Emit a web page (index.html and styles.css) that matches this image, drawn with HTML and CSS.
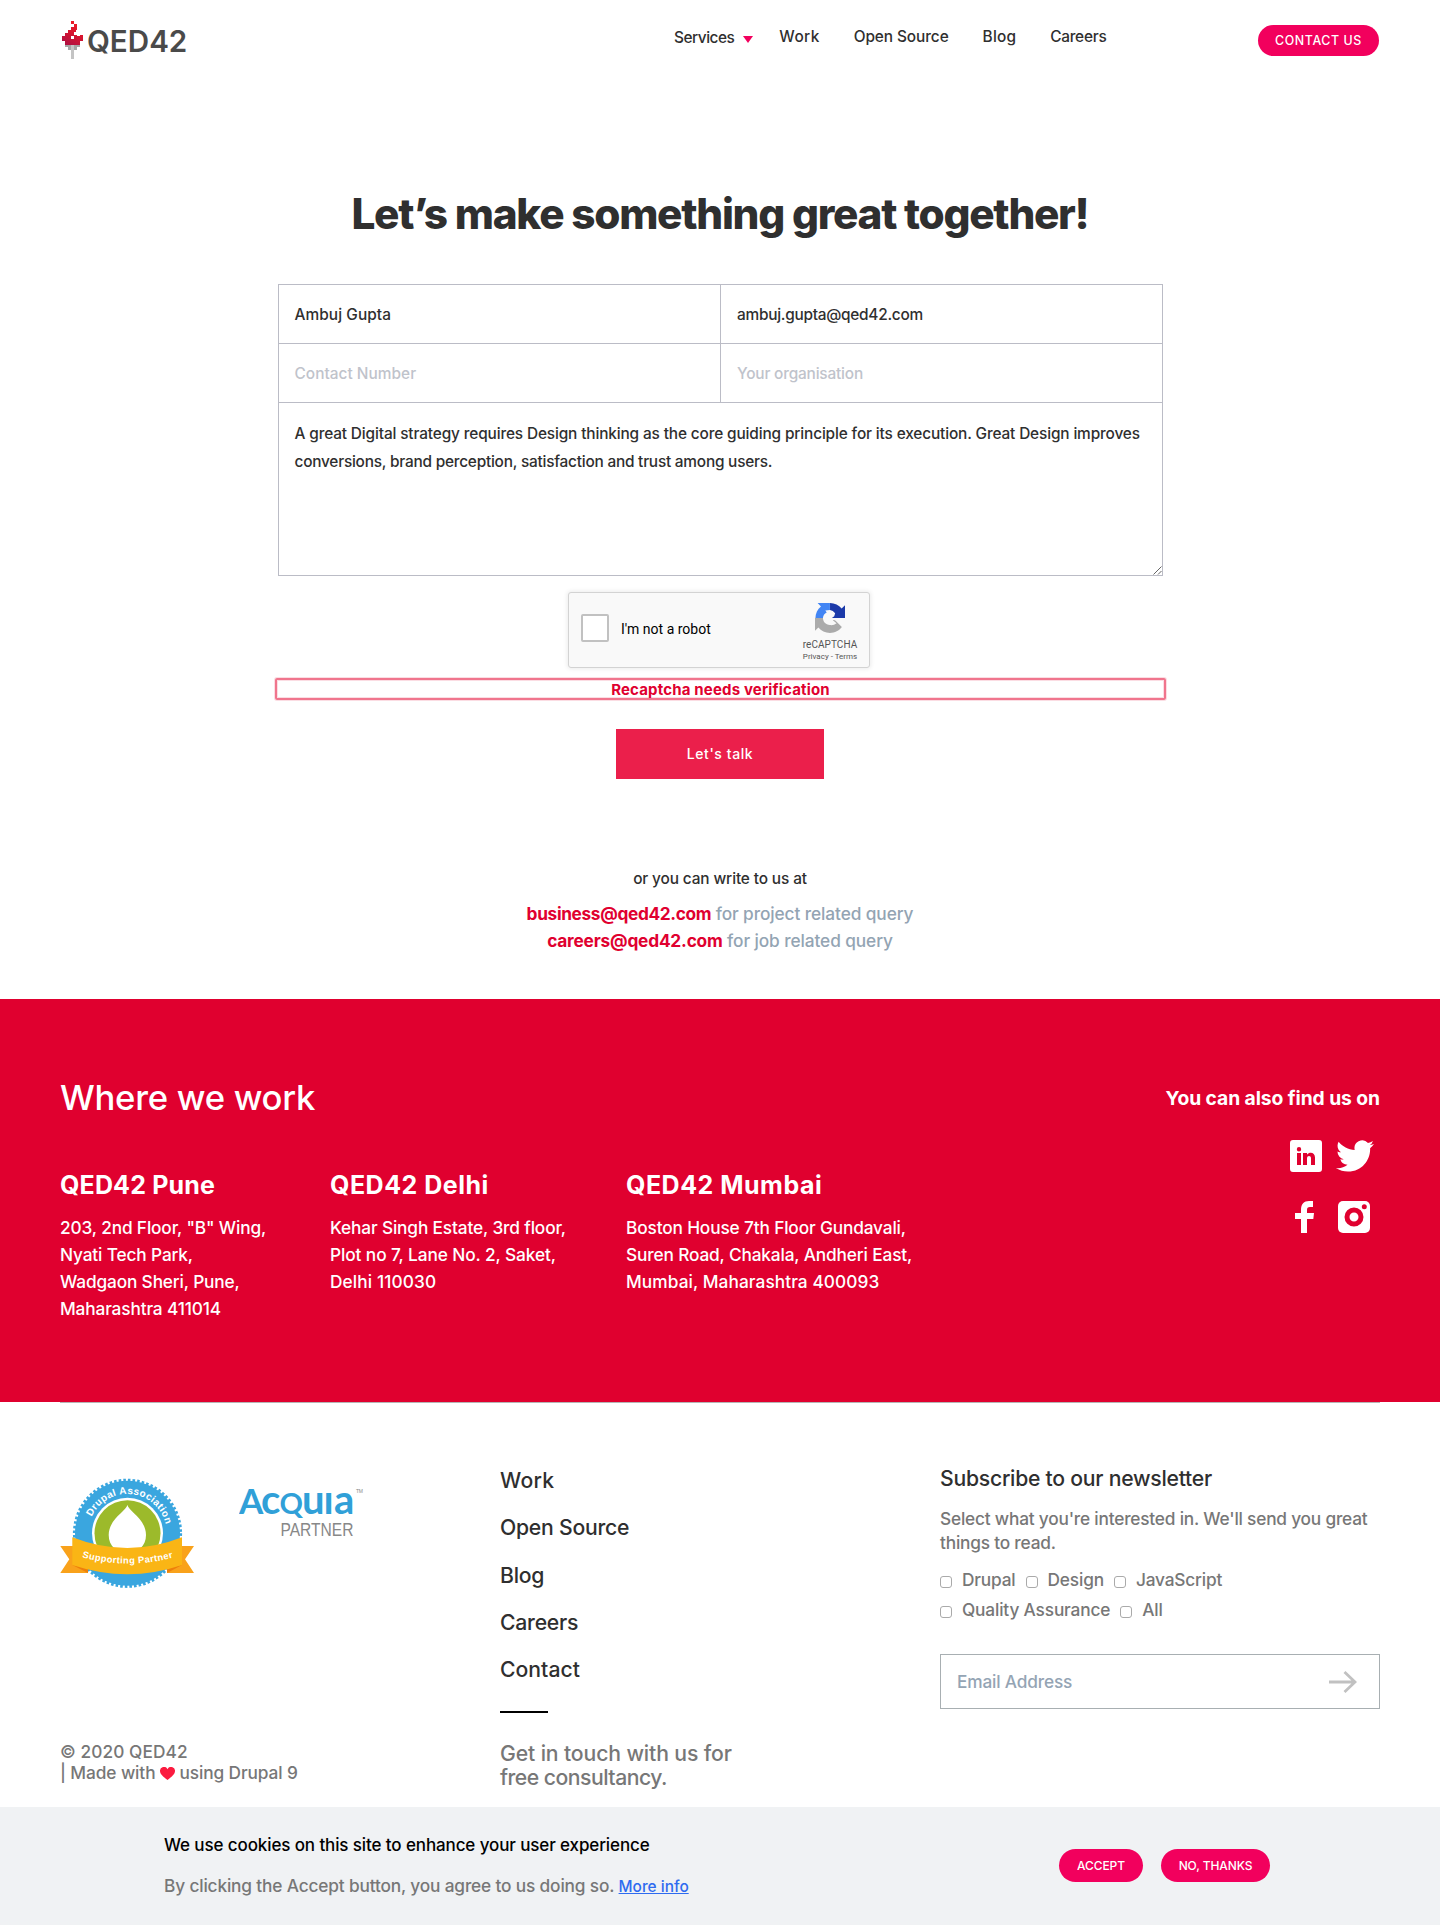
FILE: index.html
```html
<!DOCTYPE html>
<html lang="en">
<head>
<meta charset="utf-8">
<title>Contact | QED42</title>
<link rel="stylesheet" href="styles.css">
</head>
<body>
<header class="header">
  <a class="logo">
    <svg class="logo-mark" width="21" height="38" viewBox="0 0 21 38" shape-rendering="crispEdges">
      <defs><linearGradient id="flame" x1="0" y1="24" x2="12" y2="0" gradientUnits="userSpaceOnUse"><stop offset="0" stop-color="#a80f45"/><stop offset=".6" stop-color="#d8152f"/><stop offset="1" stop-color="#ee1c25"/></linearGradient></defs>
      <path fill="url(#flame)" d="M9 0h3v3H9zM12 3h3v6h-1v3h1v3h3v-1h3v6h-3v4H3v-4H0v-5h3v-3h3V9h3V6h3z"/>
      <path fill="#fff" d="M12 11h3v3h-3zM9 15h3v3H9z"/>
      <path fill="#a5a5a5" d="M3 24h15v2H3zM6 26h9v3H6z"/>
      <path fill="#c4c4c4" d="M9 24h3v14H9z"/>
    </svg>
    <span class="logo-text">QED42</span>
  </a>
  <nav class="nav">
    <a class="nav-link nav-drop"><span class="nav-services">Services</span><svg width="10" height="7" viewBox="0 0 10 7"><path fill="#f2005d" d="M0 0h10L5 7z"/></svg></a>
    <a class="nav-link nav-work">Work</a>
    <a class="nav-link nav-os">Open Source</a>
    <a class="nav-link nav-blog">Blog</a>
    <a class="nav-link nav-careers">Careers</a>
  </nav>
  <a class="pill pill-contact">CONTACT US</a>
</header>

<main class="main">
  <h1 class="title">Let’s make something great together!</h1>
  <form class="form">
    <div class="fields">
      <div class="field name">Ambuj Gupta</div>
      <div class="field address">ambuj.gupta@qed42.com</div>
      <div class="field empty phone">Contact Number</div>
      <div class="field empty">Your organisation</div>
      <div class="field message">
        <span class="message-first">A great Digital strategy requires Design thinking as the core guiding principle for its execution. Great Design improves</span><br><span>conversions, brand perception, satisfaction and trust among users.</span>
        <svg class="grip" width="9" height="9" viewBox="0 0 9 9"><path d="M.5 8.5l8-8M5 8.5L8.500 5" stroke="#666" fill="none"/></svg>
      </div>
    </div>
    <div class="captcha">
      <span class="captcha-box"></span>
      <span class="captcha-label">I'm not a robot</span>
      <div class="captcha-brand">
        <svg width="30" height="30" viewBox="0 0 64 64"><path fill="#1c3aa9" d="M64 32V4.687l-7.193 7.160C50.948 4.674 42.033.093 32.050.093V32z"/><path fill="#4285f4" d="M31.862.094H5.600l7.100 7.106C5.530 13.100.93 22.100.93 32.045H31.862z"/><path fill="#ababab" d="M.002 32.045V59.313l7.161-7.161C13.022 59.325 21.938 63.907 31.920 63.907c10.390 0 19.620-4.970 25.440-12.660L44 38 32 32z"/><path fill="#f9f9f9" d="M17 32c0-5 3-9.500 8-12l-3-4 10-1 6 2 5 5-2 6-5 4h8l-1 3-5 2 8 6c-4 3-9 5-14 4-10-1-15-7-15-15z"/></svg>
        <span class="captcha-name">reCAPTCHA</span>
        <span class="captcha-terms">Privacy - Terms</span>
      </div>
    </div>
    <p class="error">Recaptcha needs verification</p>
    <button class="submit" type="button">Let's talk</button>
  </form>
  <div class="write">
    <p class="write-lead">or you can write to us at</p>
    <p class="write-row"><b class="write-business">business@qed42.com</b> <span>for project related query</span></p>
    <p class="write-row"><b>careers@qed42.com</b> <span>for job related query</span></p>
  </div>
</main>

<section class="where">
  <div class="where-head">
    <h2 class="where-title">Where we work</h2>
    <h3 class="find">You can also find us on</h3>
  </div>
  <div class="where-body">
    <div class="office pune"><h4>QED42 Pune</h4><p>203, 2nd Floor, "B" Wing,<br>Nyati Tech Park,<br>Wadgaon Sheri, Pune,<br>Maharashtra 411014</p></div>
    <div class="office delhi"><h4>QED42 Delhi</h4><p>Kehar Singh Estate, 3rd floor,<br><span class="delhi-plot">Plot no 7, Lane No. 2, Saket,</span><br><span class="delhi-pin">Delhi 110030</span></p></div>
    <div class="office mumbai"><h4>QED42 Mumbai</h4><p>Boston House 7th Floor Gundavali,<br>Suren Road, Chakala, Andheri East,<br><span class="mumbai-pin">Mumbai, Maharashtra 400093</span></p></div>
    <div class="social">
      <svg width="32" height="32" viewBox="0 0 32 32"><path fill="#fff" fill-rule="evenodd" d="M3 0h26a3 3 0 013 3v26a3 3 0 01-3 3H3a3 3 0 01-3-3V3a3 3 0 013-3zm4 13v12h4V13zm2-6a2.200 2.200 0 100 4.400A2.200 2.200 0 009 7zm4 6v12h4v-6.500c0-3.200 4-3.200 4 0V25h4v-7.500c0-5.300-5.500-6-8-2.800V13z"/></svg>
      <svg width="38" height="32" viewBox="0 2 24 20" preserveAspectRatio="none"><path fill="#fff" d="M24 4.557a9.830 9.830 0 01-2.828.775 4.932 4.932 0 002.165-2.724 9.864 9.864 0 01-3.127 1.195 4.916 4.916 0 00-8.384 4.482C7.691 8.094 4.066 6.130 1.640 3.161a4.822 4.822 0 00-.666 2.475c0 1.710.87 3.213 2.188 4.096a4.904 4.904 0 01-2.228-.616v.061a4.923 4.923 0 003.946 4.827 4.996 4.996 0 01-2.212.085 4.937 4.937 0 004.604 3.417 9.868 9.868 0 01-6.102 2.105c-.390 0-.779-.023-1.170-.067a13.995 13.995 0 007.557 2.209c9.054 0 13.999-7.496 13.999-13.986 0-.209 0-.420-.015-.630a9.936 9.936 0 002.460-2.580z"/></svg>
      <svg width="32" height="32" viewBox="0 0 32 32"><path fill="#fff" d="M11 32V18H5v-6h6V9c0-6 3-9 8-9h4v6h-3c-2.300 0-3 1-3 3v3h7l-.7 6H17v14z"/></svg>
      <svg width="32" height="32" viewBox="0 0 32 32"><rect width="32" height="32" rx="5" fill="#fff"/><circle cx="16" cy="16" r="7" fill="#fff" stroke="#e0002f" stroke-width="5"/><circle cx="26.300" cy="5.700" r="2.500" fill="#e0002f"/></svg>
    </div>
  </div>
</section>

<footer class="footer">
  <div class="foot-col">
    <div class="badges">
      <svg class="badge" width="135" height="112" viewBox="0 0 135 112">
        <circle cx="67.500" cy="55.300" r="52.500" fill="#3aa6df"/>
        <circle cx="67.500" cy="55.300" r="53" fill="none" stroke="#3aa6df" stroke-width="3.200" stroke-dasharray="2.600 2.025"/>
        <circle cx="67.500" cy="55.300" r="35.500" fill="#fff"/>
        <circle cx="67.500" cy="55.300" r="33" fill="#9cba2b"/>
        <path fill="#fff" d="M67.400 27c1 6 18.600 14 18.600 30 0 11-8 18-18.600 18S48.700 68 48.700 57c0-16 17.700-24 18.700-30z"/>
        <path fill="#f9a21b" d="M.3 68H28v27H.3l9-13.700zM134 68h-27v27h27l-9-13.700z"/>
        <path fill="#ee7f0b" d="M12.300 87L28 95v-6zM122 87l-15 8v-6z"/>
        <path fill="#fab515" d="M12.300 59.300q55.200 21.500 109.700 0V87q-54.500 18.500-109.700 0z"/>
        <path id="arc-top" fill="none" d="M31.700 38.800a39.400 39.400 0 0174.300 8.500"/>
        <path id="arc-band" fill="none" d="M22 79.300q45.500 12.500 92 0"/>
        <text class="badge-text badge-top"><textPath href="#arc-top" textLength="97">Drupal Association</textPath></text>
        <text class="badge-text"><textPath href="#arc-band" textLength="92">Supporting Partner</textPath></text>
      </svg>
      <svg class="acquia" width="136" height="76" viewBox="0 -14 136 76">
        <text class="acq" y="27"><tspan class="acq-a" x="0">A</tspan><tspan class="acq-l" x="22">c</tspan><tspan class="acq-q" x="40.500">Q</tspan><tspan class="acq-l" x="63">u</tspan><tspan class="acq-l" x="84.500">ı</tspan><tspan class="acq-l" x="95">a</tspan></text>
        <text class="acq-p" x="41.500" y="49" textLength="73" lengthAdjust="spacingAndGlyphs">PARTNER</text>
        <text class="acq-tm" x="117" y="6" textLength="7">TM</text>
      </svg>
    </div>
    <p class="copy"><span class="copy-year">© 2020 QED42</span><br>| Made with <svg class="heart" width="15" height="13" viewBox="0 0 15 13"><path fill="#fb1b3f" d="M7.500 13C3 9.500 0 7 0 4a3.900 3.900 0 017.500-1.700A3.900 3.900 0 0115 4c0 3-3 5.500-7.500 9z"/></svg> using Drupal 9</p>
  </div>
  <div class="foot-col foot-nav">
    <a class="foot-work">Work</a><a>Open Source</a><a>Blog</a><a>Careers</a><a class="foot-contact">Contact</a>
    <i class="rule"></i>
    <p class="touch">Get in touch with us for<br><span class="tight">free consultancy.</span></p>
  </div>
  <div class="foot-col foot-news">
    <h5 class="news-title">Subscribe to our newsletter</h5>
    <p class="news-text">Select what you're interested in. We'll send you great<br>things to read.</p>
    <div class="checks"><label><i></i><span>Drupal</span></label><label><i></i><span>Design</span></label><label><i></i><span>JavaScript</span></label></div>
    <div class="checks"><label><i></i><span>Quality Assurance</span></label><label><i></i><span>All</span></label></div>
    <div class="email"><span>Email Address</span><svg width="28" height="22" viewBox="0 0 28 22"><path fill="none" stroke="#c1c1c1" stroke-width="2.800" d="M0 11h26M15.500 1L26 11 15.500 21"/></svg></div>
  </div>
</footer>

<aside class="cookie">
  <div class="cookie-copy">
    <h6 class="cookie-title">We use cookies on this site to enhance your user experience</h6>
    <p class="cookie-text">By clicking the Accept button, you agree to us doing so. <a class="more">More info</a></p>
  </div>
  <a class="pill pill-accept">ACCEPT</a>
  <a class="pill pill-no">NO, THANKS</a>
</aside>
</body>
</html>
```
FILE: styles.css
```css
* { box-sizing: border-box; }
body { margin: 0; background: #fff; color: #2f2f2f; font-family: Inter, "Liberation Sans", sans-serif; font-weight: 450; font-size: 15.4px; }
h1, h2, h3, h4, h5, h6, p { margin: 0; }
svg { display: block; flex: none; }
span, a, b { white-space: nowrap; }

.header { height: 80px; padding: 21px 60px 0 62px; display: flex; align-items: flex-start; }
.logo { display: flex; width: 612px; }
.logo-text { margin-left: 4px; padding-top: 1px; font: 600 29.600px/38px Inter, sans-serif; color: #4a4a4a; }
.nav { display: flex; padding-top: 6px; line-height: 20px; width: 584px; }
.nav-link { margin-right: 34px; }
.nav-drop { display: flex; gap: 9px; margin-right: 26px; padding-top: 1px; }
.nav-drop svg { margin-top: 8px; }
.nav-services { letter-spacing: -.0305em; }
.nav-work { letter-spacing: .0250em; }
.nav-os { letter-spacing: -.0050em; }
.nav-blog { letter-spacing: .0120em; }
.nav-careers { letter-spacing: -.016em; }
.pill { display: flex; align-items: center; justify-content: center; background: #f2005d; color: #fff; border-radius: 17px; font-size: 12px; font-weight: 500; letter-spacing: -.008em; }
.pill-contact { width: 121px; height: 31px; margin-top: 4px; font-size: 12.400px; letter-spacing: .0480em; }

.main { height: 919px; }
.title { padding-top: 104px; text-align: center; font-size: 42.300px; line-height: 60px; font-weight: 800; letter-spacing: -.0300em; }
.form { width: 885px; margin: 40px auto 0 278px; display: flex; flex-direction: column; align-items: center; }
.fields { width: 885px; display: grid; grid-template-columns: 442px 443px; grid-template-rows: 59px 59px 174px; }
.field { border: 1px solid #bbbcc6; border-width: 1px 0 0 1px; padding: 20px 15.500px; line-height: 20px; letter-spacing: -.0118em; }
.field:nth-child(even) { border-right-width: 1px; padding-left: 16px; }
.field.name { letter-spacing: .0050em; }
.field.address { letter-spacing: -.0170em; }
.field.empty { color: #bfc3cb; }
.field.phone { letter-spacing: .0020em; }
.field.message { grid-column: 1 / 3; border-width: 1px; padding-top: 17px; line-height: 28px; position: relative; letter-spacing: -.0145em; }
.message-first { letter-spacing: -.0090em; }
.grip { position: absolute; right: 0; bottom: 0; }
.captcha { width: 302px; height: 76px; margin: 16px 3px 0 0; border: 1px solid #d3d3d3; border-radius: 3px; background: #f9f9f9; box-shadow: 0 0 4px 1px rgba(0,0,0,.08); display: flex; align-items: center; padding: 0 12px; font-family: Roboto, sans-serif; font-weight: 400; color: #000; }
.captcha-box { width: 28px; height: 28px; margin-bottom: 4px; background: #fff; border: 2px solid #c1c1c1; border-radius: 2px; }
.captcha-label { font-size: 14px; margin: 0 0 2px 12px; flex: 1; }
.captcha-brand { width: 54px; height: 76px; padding-top: 11px; display: flex; flex-direction: column; align-items: center; color: #555; }
.captcha-name { font-size: 10px; line-height: 12px; margin-top: 6px; letter-spacing: .008em; }
.captcha-terms { font-size: 8px; line-height: 10px; margin-top: 1px; }
.error { width: 891px; height: 22px; margin: 10px 0 0; border: 2px solid #f0758d; border-radius: 2px; box-shadow: 0 0 0 1px #fbdde3, inset 0 0 0 1px #fbdde3; text-align: center; color: #e0002f; font-size: 15px; font-weight: 700; line-height: 19px; letter-spacing: .0110em; }
.submit { width: 208px; height: 50px; margin: 29px 1px 0 0; border: 0; padding: 0; background: #eb1f4b; color: #fff; font: 500 14px/50px Inter, sans-serif; letter-spacing: .0400em; }
.write { margin-top: 90px; text-align: center; }
.write-lead { line-height: 20px; margin-bottom: 11px; letter-spacing: -.0081em; }
.write-row { font-size: 17.300px; line-height: 27px; color: #93a4b3; letter-spacing: -.0058em; }
.write-row b { color: #e0002f; font-weight: 700; letter-spacing: -.0115em; }
.write-row .write-business { letter-spacing: -.0205em; }

.where { height: 403px; background: #e0002f; color: #fff; padding: 75px 60px 0; }
.where-head { display: flex; justify-content: space-between; line-height: 46px; }
.where-title { font-size: 34.700px; font-weight: 450; letter-spacing: -.0080em; }
.find { font-size: 19.300px; font-weight: 750; letter-spacing: -.0040em; padding-top: 1px; }
.where-body { display: flex; padding-top: 44px; }
.office { padding-top: 2px; }
.pune { width: 270px; }
.delhi { width: 296px; }
.mumbai { width: 604px; }
.office h4 { font-size: 25px; line-height: 36px; font-weight: 700; margin-bottom: 11px; letter-spacing: .0060em; }
.delhi h4, .mumbai h4 { letter-spacing: .0200em; }
.office p { font-size: 17.300px; line-height: 27px; letter-spacing: -.0090em; }
.delhi-plot { letter-spacing: -.0060em; }
.delhi-pin { letter-spacing: .0060em; }
.mumbai-pin { letter-spacing: .0040em; }
.social { display: grid; grid-template-columns: 38px 38px; gap: 29px 8px; align-content: start; width: 84px; margin: -25px 6px 0 auto; }
.social svg:last-child { margin-left: 2px; }

.footer { height: 405px; margin: 0 60px; border-top: 1px solid #b5b5b5; display: flex; color: #777; font-size: 17.300px; }
.foot-col { width: 440px; }
.badges { display: flex; align-items: flex-start; padding-top: 75px; height: 338px; }
.acquia { margin: -5px 0 0 44px; }
.badge-text { font: 700 9.300px "Liberation Sans", sans-serif; fill: #fff; }
.badge-top { font-size: 10px; }
.acq { font-family: Lato, sans-serif; font-weight: 700; fill: #30a0d8; }
.acq-a { font-size: 35px; }
.acq-l { font-size: 40px; }
.acq-q { font-size: 29px; }
.acq-p { font: 18.500px "Liberation Sans", sans-serif; fill: #888; }
.acq-tm { font: 5px "Liberation Sans", sans-serif; fill: #888; }
.copy { line-height: 21px; letter-spacing: -.0060em; }
.copy-year { letter-spacing: .0040em; }
.heart { display: inline-block; vertical-align: -1px; }
.foot-nav { padding-top: 64px; }
.foot-nav a { display: block; font-size: 21.200px; line-height: 26px; margin-bottom: 21.300px; color: #2f2f2f; width: max-content; letter-spacing: -.0110em; }
.foot-nav .foot-work { letter-spacing: .0130em; }
.foot-nav .foot-contact { letter-spacing: 0; }
.rule { display: block; width: 48px; height: 2px; background: #000; margin: 29px 0 28px; }
.touch { font-size: 21.200px; line-height: 24px; letter-spacing: -.006em; }
.touch .tight { letter-spacing: -.0241em; }
.news-title { padding-top: 62px; font-size: 21.200px; line-height: 26px; font-weight: 450; color: #2f2f2f; letter-spacing: -.0120em; }
.news-text { line-height: 24px; margin-top: 16px; letter-spacing: -.0119em; }
.checks { display: flex; line-height: 30px; height: 30px; letter-spacing: -.0100em; }
.news-text + .checks { margin-top: 10px; }
.checks label { display: flex; align-items: center; margin-right: 10px; }
.checks i { width: 12px; height: 12px; border: 1px solid #aaa; border-radius: 3px; margin: 3px 10px 0 0; }
.email { margin-top: 29px; height: 55px; border: 1px solid #a8afb2; padding: 0 22px 0 16px; display: flex; align-items: center; justify-content: space-between; color: #94a4b4; letter-spacing: -.0105em; }

.cookie { height: 118px; background: #f0f2f4; display: flex; padding-left: 164px; color: #777; font-size: 17.300px; }
.cookie-copy { width: 895px; padding-top: 25px; }
.cookie-title { font-size: 17px; line-height: 26px; font-weight: 450; color: #000; letter-spacing: -.0067em; }
.cookie-text { line-height: 26px; margin-top: 15px; letter-spacing: -.0095em; }
.more { color: #2e6bf0; text-decoration: underline; font-size: 15.400px; letter-spacing: .0010em; }
.pill-accept { width: 84px; height: 33px; margin: 42px 18px 0 0; }
.pill-no { width: 109px; height: 33px; margin-top: 42px; }
```
